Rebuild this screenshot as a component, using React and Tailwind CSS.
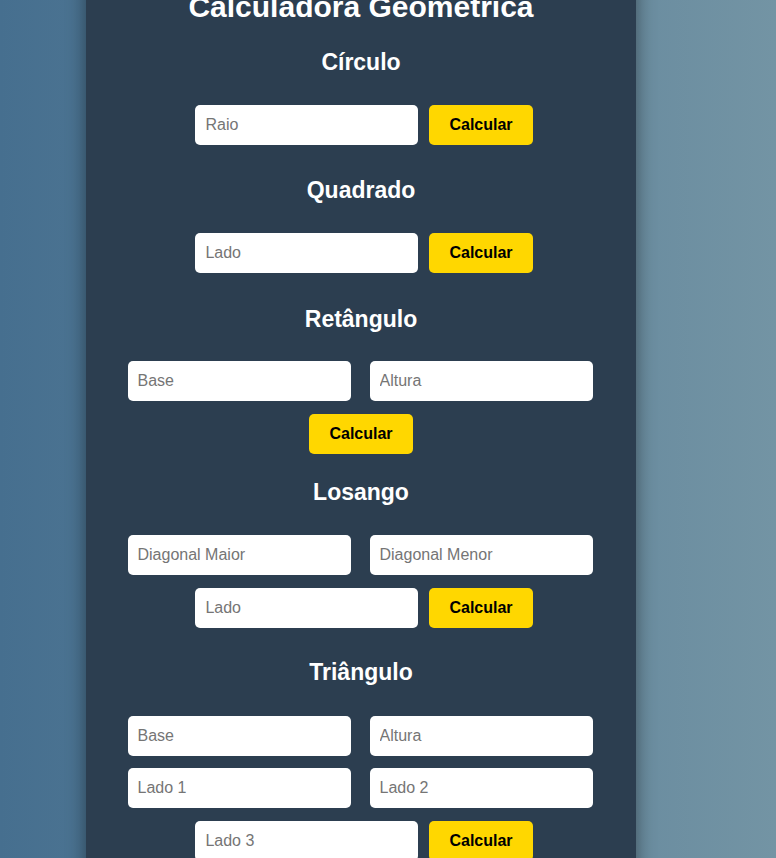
import React from "react";

const inputCls =
  "h-10 w-[223px] rounded-[5px] bg-white px-[10px] text-base text-gray-900 placeholder:text-[#757575] outline-none";

const Field = ({ placeholder }) => <input type="text" placeholder={placeholder} className={inputCls} />;

const CalcButton = () => (
  <button className="h-10 rounded-[5px] bg-[#ffd700] px-5 text-base font-bold text-black">Calcular</button>
);

const Heading = ({ children, className = "" }) => (
  <h2 className={`text-center text-[23px] font-bold leading-[27px] text-white ${className}`}>{children}</h2>
);

export default function App() {
  return (
    <div
      className="min-h-screen overflow-hidden bg-gradient-to-r from-[#466f8f] to-[#7394a4]"
      style={{ fontFamily: '"Liberation Sans", Arial, sans-serif' }}
    >
      <div className="ml-[86px] mt-[-31px] w-[550px] bg-[#2c3e50] pb-10 pt-5 shadow-[0_0_18px_rgba(0,0,0,0.45)]">
        <h1 className="text-center text-[30px] font-bold leading-9 text-white">Calculadora Geométrica</h1>

        {/* Círculo */}
        <Heading className="mt-[24px]">Círculo</Heading>
        <div className="mt-[29px] flex justify-center gap-[11px] pl-[6px]">
          <Field placeholder="Raio" />
          <CalcButton />
        </div>

        {/* Quadrado */}
        <Heading className="mt-[32px]">Quadrado</Heading>
        <div className="mt-[29px] flex justify-center gap-[11px] pl-[6px]">
          <Field placeholder="Lado" />
          <CalcButton />
        </div>

        {/* Retângulo */}
        <Heading className="mt-[33px]">Retângulo</Heading>
        <div className="mt-[28px] flex justify-center gap-[19px] pr-[2px]">
          <Field placeholder="Base" />
          <Field placeholder="Altura" />
        </div>
        <div className="mt-[13px] flex justify-center">
          <CalcButton />
        </div>

        {/* Losango */}
        <Heading className="mt-[25px]">Losango</Heading>
        <div className="mt-[29px] flex justify-center gap-[19px] pr-[2px]">
          <Field placeholder="Diagonal Maior" />
          <Field placeholder="Diagonal Menor" />
        </div>
        <div className="mt-[13px] flex justify-center gap-[11px] pl-[6px]">
          <Field placeholder="Lado" />
          <CalcButton />
        </div>

        {/* Triângulo */}
        <Heading className="mt-[31px]">Triângulo</Heading>
        <div className="mt-[30px] flex justify-center gap-[19px] pr-[2px]">
          <Field placeholder="Base" />
          <Field placeholder="Altura" />
        </div>
        <div className="mt-3 flex justify-center gap-[19px] pr-[2px]">
          <Field placeholder="Lado 1" />
          <Field placeholder="Lado 2" />
        </div>
        <div className="mt-[13px] flex justify-center gap-[11px] pl-[6px]">
          <Field placeholder="Lado 3" />
          <CalcButton />
        </div>
      </div>
    </div>
  );
}
